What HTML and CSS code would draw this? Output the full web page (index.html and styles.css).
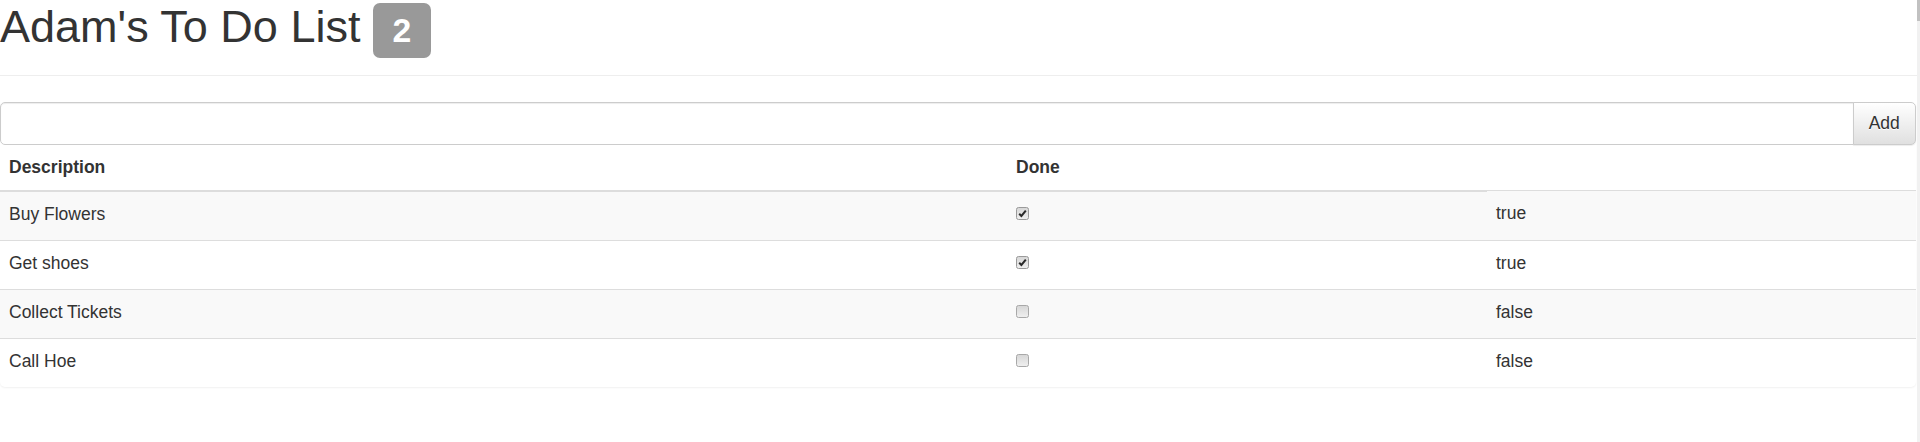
FILE: index.html
```html
<!DOCTYPE html>
<html lang="en">
<head>
<meta charset="utf-8">
<title>To Do List</title>
<link rel="stylesheet" href="styles.css">
</head>
<body>
<div class="page">
  <div class="main">
    <div class="page-header">
      <h1>Adam's To Do List <span class="label">2</span></h1>
    </div>
    <div class="panel">
      <div class="input-group">
        <input class="form-control" type="text">
        <button class="btn" type="button">Add</button>
      </div>
      <table class="table">
        <colgroup><col class="c1"><col class="c2"><col class="c3"></colgroup>
        <thead>
          <tr><th>Description</th><th>Done</th></tr>
        </thead>
        <tbody>
          <tr>
            <td>Buy Flowers</td>
            <td><span class="cb"><svg viewBox="0 0 13 13" width="13" height="13"><defs><linearGradient id="g1" x1="0" y1="0" x2="0" y2="1"><stop offset="0" stop-color="#d6d6d6"/><stop offset="1" stop-color="#f0f0f0"/></linearGradient></defs><rect x="0.5" y="0.5" width="12" height="12" rx="2" fill="url(#g1)" stroke="#9a9a9a"/><path d="M3.2 6.8 L5.4 9 L9.8 3.6" fill="none" stroke="#2a2a2a" stroke-width="2"/></svg></span></td>
            <td>true</td>
          </tr>
          <tr>
            <td>Get shoes</td>
            <td><span class="cb"><svg viewBox="0 0 13 13" width="13" height="13"><rect x="0.5" y="0.5" width="12" height="12" rx="2" fill="url(#g1)" stroke="#9a9a9a"/><path d="M3.2 6.8 L5.4 9 L9.8 3.6" fill="none" stroke="#2a2a2a" stroke-width="2"/></svg></span></td>
            <td>true</td>
          </tr>
          <tr>
            <td>Collect Tickets</td>
            <td><span class="cb"><svg viewBox="0 0 13 13" width="13" height="13"><rect x="0.5" y="0.5" width="12" height="12" rx="2" fill="url(#g1)" stroke="#a8a8a8"/></svg></span></td>
            <td>false</td>
          </tr>
          <tr>
            <td>Call Hoe</td>
            <td><span class="cb"><svg viewBox="0 0 13 13" width="13" height="13"><rect x="0.5" y="0.5" width="12" height="12" rx="2" fill="url(#g1)" stroke="#a8a8a8"/></svg></span></td>
            <td>false</td>
          </tr>
        </tbody>
      </table>
    </div>
  </div>
  <div class="scrollbar"><div class="thumb"></div></div>
</div>
</body>
</html>
```
FILE: styles.css
```css
html, body {
  margin: 0;
  padding: 0;
  background: #fff;
}
body {
  font-family: "Liberation Sans", Arial, Helvetica, sans-serif;
  font-size: 17.5px;
  line-height: 25px;
  color: #333;
}
.page {
  display: flex;
  height: 442px;
  overflow: hidden;
}
.main {
  flex: 1;
  min-width: 0;
}
.scrollbar {
  width: 3px;
  background: #f1f1f1;
}
.thumb {
  height: 21px;
  background: #c1c1c1;
}
.page-header {
  padding-bottom: 11px;
  border-bottom: 1px solid #eee;
  margin-bottom: 26px;
}
.page-header h1 {
  margin: 2.4px 0 12.5px;
  font-size: 45px;
  line-height: 49.5px;
  font-weight: normal;
  white-space: nowrap;
}
.label {
  font-size: 33.75px;
  font-weight: bold;
  line-height: 1;
  color: #fff;
  background: #999;
  padding: 8.2px 19.5px 8.85px;
  border-radius: 7px;
}
.panel {
  margin-right: 1px;
  background: #fff;
  border-radius: 5px;
  box-shadow: 0 1px 2px rgba(0, 0, 0, 0.06);
}
.input-group {
  display: flex;
  height: 42.5px;
}
.form-control {
  flex: 1;
  min-width: 0;
  margin: 0;
  box-sizing: border-box;
  height: 42.5px;
  padding: 7.5px 15px;
  font: inherit;
  color: #555;
  border: 1px solid #ccc;
  border-radius: 5px 0 0 5px;
  box-shadow: inset 0 1px 1px rgba(0, 0, 0, 0.075);
  outline: none;
}
.btn {
  box-sizing: border-box;
  width: 63.5px;
  height: 42.5px;
  margin: 0 0 0 -1px;
  padding: 0;
  font: inherit;
  color: #333;
  border: 1px solid #ccc;
  border-radius: 0 5px 5px 0;
  background: linear-gradient(to bottom, #fff 0%, #e0e0e0 100%);
  text-shadow: 0 1px 0 #fff;
  box-shadow: inset 0 1px 0 rgba(255, 255, 255, 0.15), 0 1px 1px rgba(0, 0, 0, 0.075);
}
.table {
  width: 100%;
  border-collapse: collapse;
  border-spacing: 0;
}
.c1 { width: 1007px; }
.c2 { width: 480px; }
.table th,
.table td {
  padding: 10px 10px 10px 9px;
  text-align: left;
  vertical-align: top;
  line-height: 25px;
}
.table th {
  font-weight: bold;
  border-bottom: 2px solid #ddd;
}
.table td {
  border-top: 1px solid #ddd;
  padding-bottom: 13px;
}
.table tbody tr:nth-child(odd) td {
  background: #f9f9f9;
}
.cb {
  display: inline-block;
  width: 13px;
  height: 13px;
  margin-left: 0;
  vertical-align: baseline;
}
.cb svg {
  display: block;
}
```
